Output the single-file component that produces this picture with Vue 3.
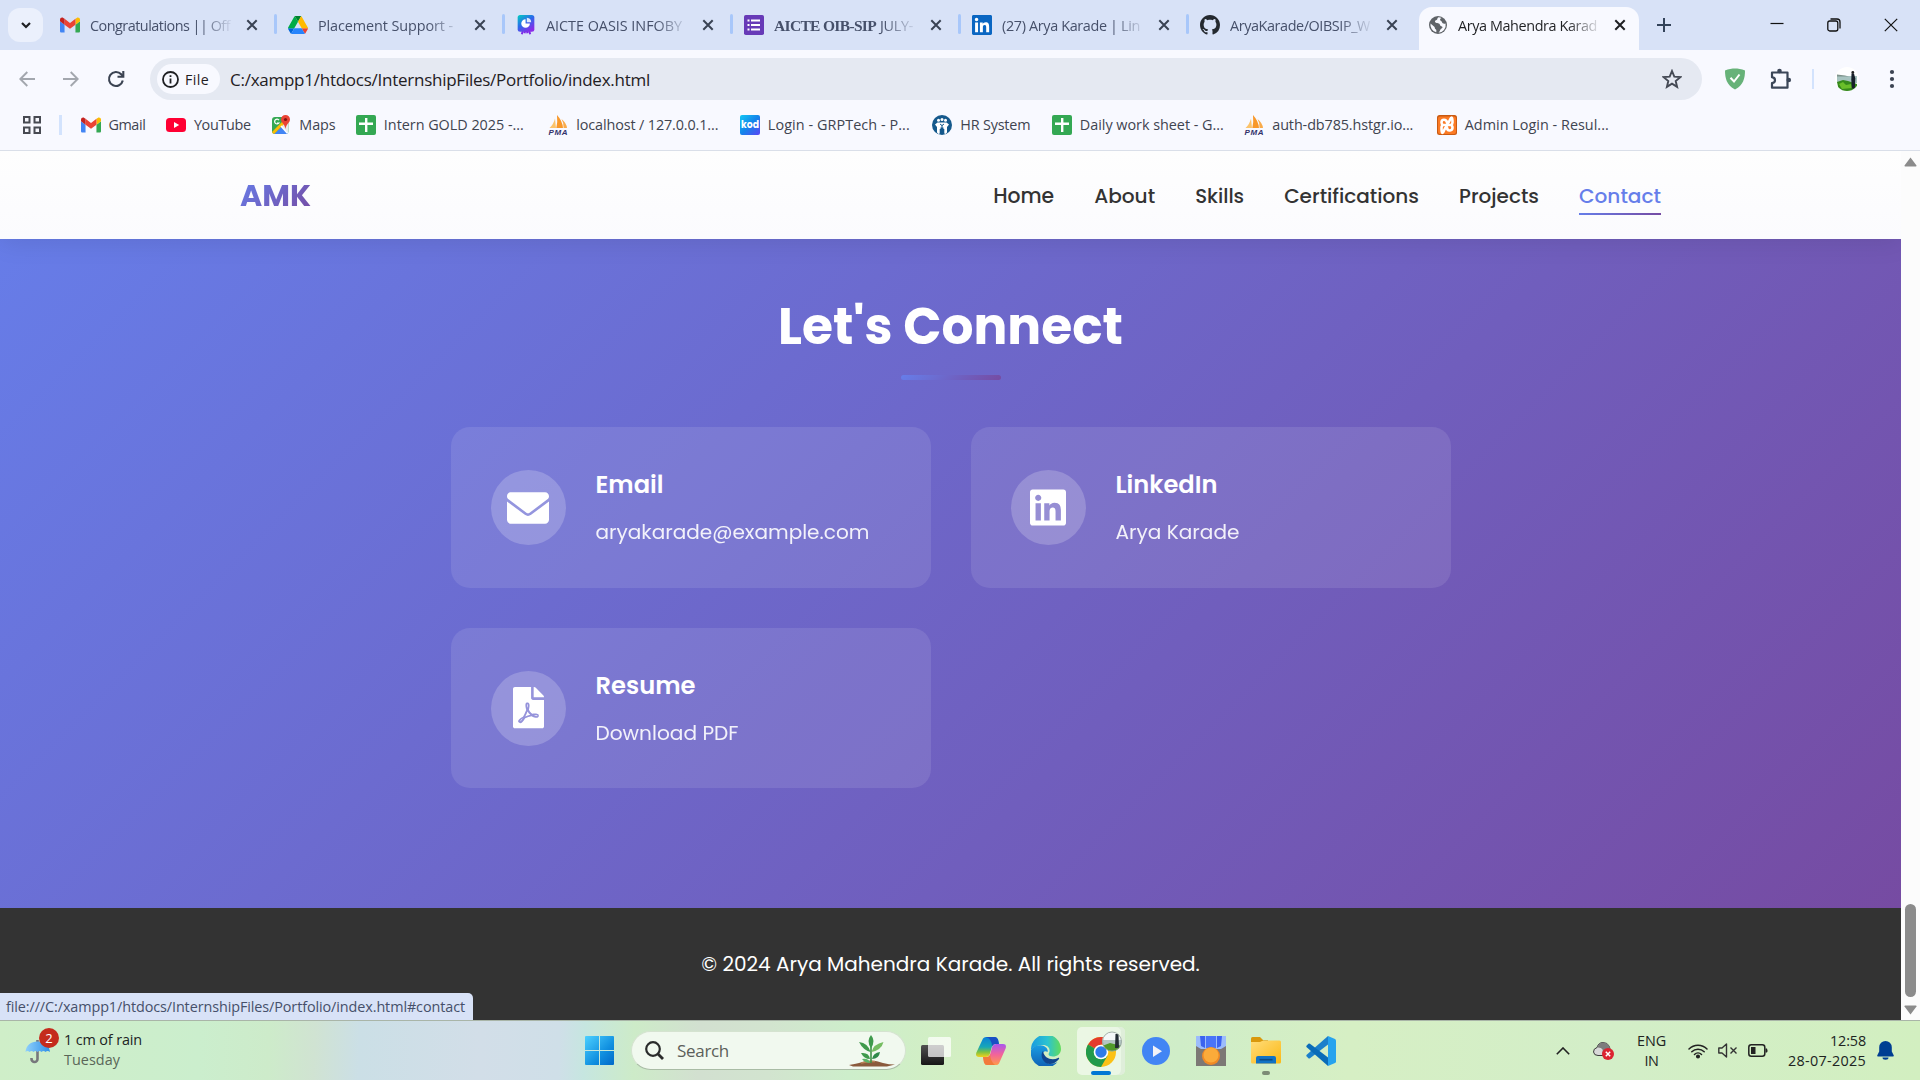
<script setup>
// Makes a label fill its measured width: by letter spacing, or by font size with the .size modifier.
const vFit = {
  mounted(el, { value, modifiers }) {
    if (!value) return
    const natural = el.getBoundingClientRect().width
    if (modifiers.size) {
      el.style.fontSize = parseFloat(getComputedStyle(el).fontSize) * value / natural + 'px'
    } else {
      el.style.letterSpacing = (value - natural) / [...el.textContent.trim()].length + 'px'
    }
  }
}

const linkedin = 'M416 32H31.9C14.3 32 0 46.5 0 64.3v383.4C0 465.5 14.3 480 31.9 480H416c17.6 0 32-14.5 32-32.3V64.3c0-17.8-14.4-32.3-32-32.3zM135.4 416H69V202.2h66.5V416zm-33.2-243c-21.3 0-38.5-17.3-38.5-38.5S80.9 96 102.2 96c21.2 0 38.5 17.3 38.5 38.5 0 21.3-17.2 38.5-38.5 38.5zm282.1 243h-66.4V312c0-24.8-.5-56.7-34.5-56.7-34.6 0-39.9 27-39.9 54.9V416h-66.4V202.2h63.7v29.2h.9c8.9-16.8 30.6-34.5 62.9-34.5 67.2 0 79.7 44.3 79.7 101.9V416z'
const sheet = '<rect width="20" height="20" rx="2" fill="#34a853"/><path d="M9 3h2.4v4.6H17V10h-5.6v7H9v-7H3V7.6h6z" fill="#fff"/>'
const pma = '<path d="M1.5 13Q5.500 9.500 7 3.500L8 13z" fill="#fbc36b"/><path d="M8.3 13Q9.800 7 9 0Q14.500 6 15 13z" fill="#f8982a"/><path d="M15.6 13Q16 8 13.500 4Q18.500 8 19 13z" fill="#f9ab4b"/><text x="10" y="19.5" text-anchor="middle" font-family="Liberation Sans, sans-serif" font-weight="700" font-style="italic" font-size="8" textLength="19" fill="#33336b">PMA</text>'

const icons = {
  gmail: { vb: '52 42 88 66', body: '<path fill="#4285f4" d="M58 108h14V74L52 59v43c0 3.320 2.690 6 6 6"/><path fill="#34a853" d="M120 108h14c3.320 0 6-2.690 6-6V59l-20 15"/><path fill="#fbbc04" d="M120 48v26l20-15v-8c0-7.420-8.470-11.650-14.400-7.200"/><path fill="#ea4335" d="M72 74V48l24 18 24-18v26L96 92"/><path fill="#c5221f" d="M52 51v8l20 15V48l-5.600-4.200c-5.940-4.450-14.400-.22-14.400 7.200"/>' },
  drive: { vb: '0 0 87.3 78', body: '<path d="m6.6 66.850 3.850 6.650c.8 1.4 1.950 2.5 3.3 3.3l13.750-23.8h-27.5c0 1.550.4 3.1 1.2 4.5z" fill="#0066da"/><path d="m43.650 25-13.750-23.8c-1.350.8-2.5 1.9-3.3 3.3l-25.4 44a9.060 9.060 0 0 0-1.2 4.5h27.5z" fill="#00ac47"/><path d="m73.550 76.8c1.350-.8 2.5-1.9 3.3-3.3l1.6-2.750 7.650-13.250c.8-1.4 1.2-2.950 1.2-4.5h-27.502l5.852 11.5z" fill="#ea4335"/><path d="m43.650 25 13.750-23.8c-1.350-.8-2.9-1.2-4.5-1.2h-18.5c-1.6 0-3.150.45-4.5 1.2z" fill="#00832d"/><path d="m59.8 53h-32.3l-13.750 23.8c1.350.8 2.9 1.2 4.5 1.2h50.8c1.6 0 3.150-.45 4.5-1.2z" fill="#2684fc"/><path d="m73.4 26.5-12.7-22c-.8-1.4-1.950-2.5-3.3-3.3l-13.750 23.8 16.150 28h27.450c0-1.550-.4-3.1-1.2-4.5z" fill="#ffba00"/>' },
  board: { vb: '0 0 20 24', body: '<defs><linearGradient id="bd" x1="0" y1="0" x2=".7" y2="1"><stop stop-color="#00d0c0"/><stop offset=".5" stop-color="#2a6bea"/><stop offset="1" stop-color="#8a2be8"/></linearGradient></defs><path d="M6.500 18l-1.500 5M13.500 18l1.500 5M9 19l-.8 3M11 19l.8 3" stroke="#7d2ae8" stroke-width="2.4"/><rect width="20" height="20" rx="3" fill="url(#bd)"/><path d="M9.500 5a5.200 5.200 0 1 0 5.200 5.200H9.500z" fill="#fff"/><path d="M11 3.200a5.500 5.500 0 0 1 5.200 5.500H11z" fill="#fff" opacity=".85"/>' },
  forms: { vb: '0 0 20 20', body: '<rect width="20" height="20" rx="1.8" fill="#673ab7"/><path d="M7 5.500h9M7 10h9M7 14.500h9M3.500 5.500h2M3.500 10h2M3.500 14.500h2" stroke="#fff" stroke-width="2"/>' },
  linkedin: { vb: '0 32 448 448', body: `<path fill="#fff" d="M40 60h370v380H40z"/><path fill="#0a66c2" d="${linkedin}"/>` },
  github: { vb: '0 0 16 16', body: '<path fill="#24292f" d="M8 0C3.580 0 0 3.580 0 8c0 3.540 2.290 6.530 5.470 7.590.4.07.55-.17.55-.38 0-.19-.01-.82-.01-1.490-2.010.37-2.530-.49-2.690-.94-.09-.23-.48-.94-.82-1.130-.28-.15-.68-.52-.01-.53.63-.01 1.080.58 1.230.82.72 1.210 1.870.87 2.330.66.07-.52.28-.87.51-1.070-1.780-.2-3.640-.89-3.640-3.950 0-.87.31-1.590.82-2.150-.08-.2-.36-1.020.08-2.120 0 0 .67-.21 2.200.82.64-.18 1.320-.27 2-.27.68 0 1.360.09 2 .27 1.530-1.040 2.200-.82 2.200-.82.44 1.100.16 1.920.08 2.120.51.56.82 1.270.82 2.150 0 3.070-1.870 3.750-3.650 3.950.29.25.54.73.54 1.480 0 1.070-.01 1.930-.01 2.200 0 .21.15.46.55.38A8.013 8.013 0 0 0 16 8c0-4.420-3.580-8-8-8z"/>' },
  globe: { vb: '0 0 20 20', body: '<circle cx="10" cy="10" r="9" fill="#5f6368"/><path d="M10.500 2.200c-1.800 1-.5 2.300-2 2.800-1.700.5-2 1.500-1 2.500 1.200 1 4.200.2 4.500 2.500.2 1.500 2.300 1 2.500 2.300.1 1.500-1.800 1.200-2.300 2.600-.3 1-1.200 2.500-2.200 2.900A7.800 7.800 0 0 0 17.600 8.500c-1.600.5-3.300.2-3.500-1.200-.2-1.200-2-1.300-2-2.600 0-1 .8-1.400 1.600-1.600a8 8 0 0 0-3.200-.9z" fill="#f8f9ff"/><path d="M2.500 8.500l3.800 3.200c.8.700.2 2 1.300 2.600 1 .6.9 2 .6 3A7.800 7.800 0 0 1 2.500 8.500z" fill="#f8f9ff"/>' },
  youtube: { vb: '0 0 20 20', body: '<rect y="3" width="20" height="14" rx="3.5" fill="#ff0033"/><path d="M8 7v6l5.200-3z" fill="#fff"/>' },
  maps: { vb: '0 0 20 20', body: '<defs><clipPath id="mc"><rect x="1" y="2" width="16.5" height="17" rx="3"/></clipPath></defs><g clip-path="url(#mc)"><path fill="#34a853" d="M0 0h18v20H0z"/><path fill="#e8eaed" d="M10 11l9-8v17h-3z"/><path fill="#4285f4" d="M10.500 11.500L19 20H2z"/><path d="M0 20L18 2" stroke="#fbbc04" stroke-width="3"/><path d="M10 11l8 9" stroke="#fff" stroke-width="1.5"/></g><path d="M8 5.200A2.400 2.400 0 1 0 8 8H6" fill="none" stroke="#fff" stroke-width="1.200"/><path d="M14.500 0a4.500 4.500 0 0 0-4.500 4.600c0 3.200 3.800 4.500 4.500 9.400.7-4.900 4.500-6.200 4.500-9.400A4.500 4.500 0 0 0 14.500 0z" fill="#ea4335"/><circle cx="14.5" cy="4.5" r="1.6" fill="#811411"/>' },
  sheet: { vb: '0 0 20 20', body: sheet },
  pma: { vb: '0 0 20 20', body: pma },
  kod: { vb: '0 0 20 20', body: '<defs><linearGradient id="kd" x1="0" y1="0" x2="1" y2="1"><stop stop-color="#12c8f4"/><stop offset=".5" stop-color="#1484ea"/><stop offset="1" stop-color="#5a45f5"/></linearGradient></defs><rect width="20" height="20" rx="2" fill="url(#kd)"/><text x="10" y="13.3" text-anchor="middle" font-family="Poppins, Inter, sans-serif" font-weight="700" font-size="9.500" textLength="18" lengthAdjust="spacingAndGlyphs" fill="#fff">kod</text>' },
  hr: { vb: '0 0 20 20', body: '<circle cx="10" cy="10" r="10" fill="#15598c"/><g fill="#fff"><circle cx="6.5" cy="5.3" r="1.5"/><circle cx="10" cy="4.6" r="1.5"/><circle cx="13.5" cy="5.3" r="1.5"/><path d="M3 9.500L5.500 7.500h9L17 9.500l-2 2.500v5.500l-1.500 1.500-1.200-.5V14h-.8v-1.500h-3V14h-.8v4.500l-1.200.5L5 17.500V12z"/></g><path d="M8 9l2 1.500L12 9M10 10v9" stroke="#15598c" fill="none"/>' },
  xampp: { vb: '0 0 20 20', body: '<rect width="20" height="20" rx="2.5" fill="#c95a12"/><rect x="1" y="1.5" width="18" height="17.5" rx="2" fill="#fb7a24"/><g fill="none" stroke="#fff" stroke-width="2.6" stroke-linecap="round" stroke-linejoin="round"><path d="M4.500 7.500Q4.500 4.800 7 4.800T10 7.500T13 4.800T15.500 7.500Q15.500 9.500 13.800 10Q15.500 10.500 15.500 12.800T13 15.500T10 12.800T7 15.500T4.500 12.800Q4.500 10.500 6.200 10Q4.500 9.500 4.500 7.500z"/><path d="M7.500 10h5"/></g>' }
}

const tabs = [
  { icon: 'gmail', title: 'Congratulations || Off', fit: 140 },
  { icon: 'drive', title: 'Placement Support -', fit: 135 },
  { icon: 'board', title: 'AICTE OASIS INFOBY', fit: 136 },
  { icon: 'forms', strong: 'AICTE OIB-SIP', title: 'JULY-', fit: 33 },
  { icon: 'linkedin', title: '(27) Arya Karade | Lin', fit: 138 },
  { icon: 'github', title: 'AryaKarade/OIBSIP_W', fit: 140 },
  { icon: 'globe', title: 'Arya Mahendra Karad', fit: 139, active: true }
]

const bookmarks = [
  { icon: 'gmail', text: 'Gmail', w: 37, fit: 37 },
  { icon: 'youtube', text: 'YouTube', w: 57, fit: 57 },
  { icon: 'maps', text: 'Maps', w: 36, fit: 36 },
  { icon: 'sheet', text: 'Intern GOLD 2025 -...', w: 144, fit: 140 },
  { icon: 'pma', text: 'localhost / 127.0.0.1...', w: 143, fit: 142 },
  { icon: 'kod', text: 'Login - GRPTech - P...', w: 144, fit: 142 },
  { icon: 'hr', text: 'HR System', w: 71, fit: 70 },
  { icon: 'sheet', text: 'Daily work sheet - G...', w: 144, fit: 144 },
  { icon: 'pma', text: 'auth-db785.hstgr.io...', w: 144, fit: 141 },
  { icon: 'xampp', text: 'Admin Login - Resul...', w: 144, fit: 144 }
]

const nav = [
  { text: 'Home', fit: 61 },
  { text: 'About', fit: 61 },
  { text: 'Skills', fit: 49 },
  { text: 'Certifications', fit: 135 },
  { text: 'Projects', fit: 80 },
  { text: 'Contact', fit: 82, active: true }
]

const cards = [
  { title: 'Email', tFit: 68, text: 'aryakarade@example.com', fit: 274, vb: '0 0 512 512', w: 42, d: 'M48 64C21.500 64 0 85.500 0 112c0 15.100 7.100 29.300 19.200 38.400L236.800 313.600c11.400 8.500 27 8.500 38.400 0L492.800 150.400c12.100-9.100 19.200-23.300 19.200-38.400c0-26.500-21.500-48-48-48H48zM0 176V400c0 26.500 21.500 48 48 48H464c26.500 0 48-21.500 48-48V176L294.400 339.200c-22.800 17.100-54 17.100-76.800 0L0 176z' },
  { title: 'LinkedIn', tFit: 102, text: 'Arya Karade', fit: 124, vb: '0 0 448 512', w: 36, d: linkedin },
  { title: 'Resume', tFit: 100, text: 'Download PDF', fit: 143, vb: '0 0 384 512', w: 31, d: 'M181.900 256.100c-5-16-4.900-46.900-2-46.900 8.400 0 7.600 36.900 2 46.900zm-1.700 47.200c-7.700 20.200-17.300 43.300-28.400 62.700 18.300-7 39-17.200 62.900-21.900-12.700-9.600-24.900-23.400-34.500-40.800zM86.100 428.100c0 .8 13.200-5.400 34.900-40.200-6.700 6.300-29.100 24.500-34.900 40.200zM248 160h136v328c0 13.300-10.700 24-24 24H24c-13.300 0-24-10.700-24-24V24C0 10.700 10.700 0 24 0h200v136c0 13.200 10.800 24 24 24zm-8 171.800c-20-12.200-33.300-29-42.700-53.800 4.500-18.500 11.600-46.600 6.200-64.200-4.700-29.400-42.400-26.500-47.800-6.800-5 18.300-.4 44.100 8.100 77-11.600 27.600-28.700 64.600-40.800 85.800-.1 0-.1.1-.2.1-27.100 13.900-73.600 44.500-54.500 68 5.600 6.900 16 10 21.500 10 17.900 0 35.700-18 61.100-61.800 25.800-8.500 54.100-19.100 79-23.200 21.700 11.800 47.100 19.500 64 19.500 29.200 0 31.200-32 19.700-43.400-13.900-13.600-54.300-9.700-73.600-7.200zM377 105L279 7c-4.500-4.500-10.600-7-17-7h-6v128h128v-6.100c0-6.300-2.500-12.400-7-16.900zm-74.100 255.300c4.100-2.700-2.500-11.900-42.800-9 37.100 15.800 42.800 9 42.800 9z' }
]
</script>

<template>
  <div class="screen">
    <header class="tabstrip">
      <button class="tab-search">
        <svg width="14" height="14" viewBox="0 0 14 14"><path d="M3 5l4 4 4-4" fill="none" stroke="#1f2023" stroke-width="2.2" /></svg>
      </button>
      <div class="tabs">
        <div v-for="t in tabs" :key="t.icon" class="tab" :class="{ active: t.active }">
          <svg class="tab-icon" :viewBox="icons[t.icon].vb" v-html="icons[t.icon].body"></svg>
          <div class="tab-title">
            <span v-if="t.strong" v-fit="102" class="tab-strong">{{ t.strong }}</span>
            <span v-fit="t.fit" class="line">{{ t.title }}</span>
          </div>
          <svg class="close" width="12" height="12" viewBox="0 0 12 12"><path d="M1.3 1.3l9.4 9.4M10.7 1.3l-9.4 9.4" stroke="currentColor" stroke-width="2" /></svg>
        </div>
      </div>
      <svg class="new-tab" width="14" height="14" viewBox="0 0 14 14"><path d="M7 0v14M0 7h14" stroke="#33435a" stroke-width="2" /></svg>
      <div class="window-buttons">
        <svg width="14" height="14" viewBox="0 0 14 14"><path d="M.5 5.500h13" stroke="#111" stroke-width="1.2" /></svg>
        <svg width="14" height="14" viewBox="0 0 14 14" fill="none" stroke="#111" stroke-width="1.3"><rect x=".8" y="3" width="10" height="10" rx="2" /><path d="M3.500 1h6.500a3 3 0 0 1 3 3v6.500" /></svg>
        <svg width="14" height="14" viewBox="0 0 14 14"><path d="M.8.8l12.400 12.400M13.200.8L.8 13.200" stroke="#111" stroke-width="1.2" /></svg>
      </div>
    </header>

    <div class="chrome">
      <div class="toolbar">
        <svg class="tb" width="16" height="16" viewBox="0 0 16 16" fill="none" stroke="#a3a7ae" stroke-width="1.9"><path d="M16 8H1.500M8.300 1L1.300 8l7 7" /></svg>
        <svg class="tb" width="16" height="16" viewBox="0 0 16 16" fill="none" stroke="#a3a7ae" stroke-width="1.9"><path d="M0 8h14.500M7.700 1l7 7-7 7" /></svg>
        <svg class="tb" width="18" height="18" viewBox="0 0 18 18" fill="none" stroke="#3b4352" stroke-width="2.1"><path d="M15.800 10.500A7 7 0 1 1 14.200 4.300L16 6.300" /><path d="M16.300 1v5.800h-5.800" /></svg>
        <div class="omnibox">
          <div class="chip">
            <svg width="17" height="17" viewBox="0 0 17 17"><circle cx="8.5" cy="8.5" r="7.5" fill="none" stroke="#1f2023" stroke-width="1.8" /><path d="M8.500 7.500v5M8.500 4.200v1.800" stroke="#1f2023" stroke-width="1.8" /></svg>
            <span v-fit="24" class="line">File</span>
          </div>
          <span v-fit="420" class="line url">C:/xampp1/htdocs/InternshipFiles/Portfolio/index.html</span>
          <svg class="star" width="20" height="20" viewBox="0 0 20 20"><path d="M10 2l2.300 5.600 6 .5-4.600 3.900 1.400 5.900-5.100-3.200-5.100 3.200 1.400-5.900L1.700 8.100l6-.5z" fill="none" stroke="#454a55" stroke-width="1.9" /></svg>
        </div>
        <svg class="guard" width="22" height="22" viewBox="0 0 22 22"><path d="M11 .5c3 0 6.500.6 10 2 0 7.500-1.500 14.500-10 19C2.500 17 1 10 1 2.500c3.500-1.400 7-2 10-2z" fill="#67b279" /><path d="M6.500 9.800l3.500 3.700 5.500-7" fill="none" stroke="#fff" stroke-width="2" /></svg>
        <svg class="puzzle" width="23" height="23" viewBox="0 0 23 23"><path d="M3 4.500h15.500v15.200H3v-4.500q3-.5 3-3T3 9.200z" fill="none" stroke="#3b4658" stroke-width="2.2" stroke-linejoin="round" /><circle cx="10.5" cy="3" r="2.3" fill="#3b4658" /><circle cx="19.8" cy="12" r="2.3" fill="#3b4658" /></svg>
        <i class="tb-sep"></i>
        <svg class="avatar" width="24" height="24" viewBox="0 0 24 24"><defs><clipPath id="av"><circle cx="12" cy="12" r="12" /></clipPath></defs><g clip-path="url(#av)"><path fill="#fff" d="M0 0h24v24H0z" /><path fill="#a8c4c0" d="M2 9h20v7H2z" /><path fill="#7f938c" d="M2 7.500l8 1 4 1H2z" /><path fill="#368a1c" d="M2 15l6-2 5 1 9 3v7H4z" /><path fill="#6abe2a" d="M4 17l4-2 3 3 5-1 1 4-10 1z" /><path fill="#17202a" d="M16.500 6.500h2.500l1.300 5-.5 10h-3l-.5-9z" /><circle cx="17.8" cy="5.5" r="1.4" fill="#222" /></g></svg>
        <svg class="dots" width="6" height="20" viewBox="0 0 6 20" fill="#3b4352"><circle cx="3" cy="3" r="2.1" /><circle cx="3" cy="10" r="2.1" /><circle cx="3" cy="17" r="2.1" /></svg>
      </div>
      <div class="bookmarks">
        <svg class="apps" width="18" height="18" viewBox="0 0 18 18" fill="none" stroke="#474a52" stroke-width="2"><path d="M1 1h5.500v5.500H1zM11.500 1H17v5.500h-5.500zM1 11.500h5.500V17H1zM11.500 11.500H17V17h-5.500z" /></svg>
        <i class="bm-sep"></i>
        <div v-for="b in bookmarks" :key="b.text" class="bm">
          <svg class="bm-icon" :viewBox="icons[b.icon].vb" v-html="icons[b.icon].body"></svg>
          <div class="bm-label" :style="{ width: b.w + 'px' }"><span v-fit="b.fit" class="line">{{ b.text }}</span></div>
        </div>
      </div>
    </div>

    <div class="viewport">
      <div class="page">
        <nav class="nav">
          <span v-fit.size="71" class="logo line">AMK</span>
          <ul class="links">
            <li v-for="n in nav" :key="n.text" :class="{ active: n.active }"><span v-fit.size="n.fit" class="line">{{ n.text }}</span></li>
          </ul>
        </nav>
        <section class="contact">
          <h2><span v-fit.size="345" class="line">Let's Connect</span></h2>
          <i class="rule"></i>
          <div class="grid">
            <article v-for="c in cards" :key="c.title" class="card">
              <div class="bubble"><svg :width="c.w" :viewBox="c.vb"><path :d="c.d" fill="#fff" /></svg></div>
              <div class="info">
                <h3><span v-fit.size="c.tFit" class="line">{{ c.title }}</span></h3>
                <p><span v-fit.size="c.fit" class="line">{{ c.text }}</span></p>
              </div>
            </article>
          </div>
        </section>
        <footer class="footer"><span v-fit.size="499" class="line">© 2024 Arya Mahendra Karade. All rights reserved.</span></footer>
        <div class="status"><span v-fit="459" class="line">file:///C:/xampp1/htdocs/InternshipFiles/Portfolio/index.html#contact</span></div>
      </div>
      <div class="scrollbar">
        <svg width="13" height="10" viewBox="0 0 13 10"><path d="M6.500.5L12.500 8.500q.2 1-.8 1H1.300q-1 0-.8-1z" fill="#8b8b8b" /></svg>
        <i class="thumb"></i>
        <svg width="13" height="10" viewBox="0 0 13 10"><path d="M6.500 9.500L.5 1.500q-.2-1 .8-1h10.400q1 0 .8 1z" fill="#8b8b8b" /></svg>
      </div>
    </div>

    <div class="taskbar">
      <div class="weather">
        <div class="umbrella">
          <svg width="26" height="28" viewBox="0 0 26 28"><defs><linearGradient id="um" x1="0" x2="1"><stop stop-color="#8fd0fb" /><stop offset="1" stop-color="#2f8fe8" /></linearGradient></defs><path d="M12.500 4v19a3 3 0 0 1-6 0v-1" fill="none" stroke="#77777c" stroke-width="2.6" /><path d="M.5 16C1 9.500 6 5.500 12.500 5.500S24.500 9.500 25 16q-2.500-2-4.500 0-2-1.800-4 0-2-1.800-4 0-2-1.800-4 0-2-1.800-4 0-2-1.800-4 0z" fill="url(#um)" /></svg>
          <b class="badge">2</b>
        </div>
        <div class="two">
          <span v-fit="78" class="line">1 cm of rain</span>
          <span v-fit="56" class="line dim">Tuesday</span>
        </div>
      </div>
      <div class="dock">
        <svg class="start" width="29" height="29" viewBox="0 0 29 29"><defs><linearGradient id="wn" x1="0" y1="0" x2="1" y2="1"><stop stop-color="#4cd0ff" /><stop offset=".6" stop-color="#1190e0" /><stop offset="1" stop-color="#0067c8" /></linearGradient></defs><path d="M1 0h13v14H0V1q0-1 1-1zM15 0h13q1 0 1 1v13H15zM0 15h14v14H1q-1 0-1-1zM15 15h14v13q0 1-1 1H15z" fill="url(#wn)" /></svg>
        <div class="search">
          <svg width="19" height="19" viewBox="0 0 19 19" fill="none" stroke="#2a2b2b"><circle cx="8" cy="8" r="6.8" stroke-width="2.2" /><path d="M13 13l5 5" stroke-width="2.8" /></svg>
          <span v-fit="52" class="line">Search</span>
          <svg class="plant" width="46" height="32" viewBox="0 0 46 32"><path d="M0 30q6-1 10-2 6-2.500 12-2.500t12 2.500q6 1.500 12 1.500l-8 2H4z" fill="#8a5a3c" /><path d="M12 28q6-2 14-1.500" stroke="#b98055" stroke-width="1.5" fill="none" /><path d="M22 28V10" stroke="#3f9147" stroke-width="1.6" /><g fill="#3f9a4c"><path d="M22 0q5 6 0 13-5-7 0-13z" /><path d="M21.500 17Q14 15 10 7q9 1 11.500 10z" /><path d="M22.500 17q2-8 12-10-2 8-12 10z" fill="#76bd62" /><path d="M21 24q-6 0-9-6 8-1 9 6z" /><path d="M21 28q-5 0-8-4 7-1 8 4z" fill="#5bb368" /><path d="M23 24q1-6 8-7-1 7-8 7z" fill="#2f8a4a" /></g></svg>
        </div>
        <div class="app"><svg width="30" height="28" viewBox="0 0 30 28"><defs><linearGradient id="tv" x2="0" y2="1"><stop stop-color="#505050" /><stop offset="1" stop-color="#161616" /></linearGradient></defs><rect y="8" width="23" height="20" rx="1.5" fill="url(#tv)" /><rect x="7" y="0" width="23" height="20" rx="1.5" fill="#fff" opacity=".72" /></svg></div>
        <div class="app"><svg width="30" height="28" viewBox="0 0 30 28"><defs><linearGradient id="c1" x2="0" y2="1"><stop stop-color="#0b7fd8" /><stop offset=".5" stop-color="#17a7b8" /><stop offset=".75" stop-color="#7cc242" /><stop offset="1" stop-color="#f3d11c" /></linearGradient><linearGradient id="c2" x2="0" y2="1"><stop stop-color="#a956ee" /><stop offset=".5" stop-color="#f2649a" /><stop offset="1" stop-color="#ff9b4a" /></linearGradient></defs><path d="M7 1.500Q8 0 10 0h9q2 0 3 2.500L23 7h-4q-2.500 0-3.200 3l-2 7q-1 3-4 3H3q-4 0-2.600-4.500z" fill="url(#c1)" /><path d="M23 26.500Q22 28 20 28h-9q-2 0-3-2.500L7 20h4q2.500 0 3.200-3l2-7q1-3 4-3H27q4 0 2.600 4.500z" fill="url(#c2)" /><path d="M10 0h9q2 0 3 2.500L23 7h-4q-2 0-3 2.500Q16 2 10 0z" fill="#1a4fc4" /><path d="M7 20h4q2.500 0 3.200-3Q14 24 19 28h-8q-2 0-3-2.500z" fill="#f27a3c" /></svg></div>
        <div class="app"><svg width="30" height="30" viewBox="0 0 30 30"><defs><linearGradient id="e1"><stop stop-color="#1a9be0" /><stop offset=".55" stop-color="#2cc3d0" /><stop offset="1" stop-color="#62dc5a" /></linearGradient><linearGradient id="e2" x2="0" y2="1"><stop stop-color="#1b9de2" /><stop offset="1" stop-color="#0f5fb4" /></linearGradient></defs><path d="M0 14A15 15 0 0 1 30 13c0 5-4 7.500-8 7.500-3 0-5.500-1-4-3.500 2-4-1-8-6-8C7 9 2 11 0 14z" fill="url(#e1)" /><path d="M0 14c2-4 7-5.500 11-4.500 4 .8 6.500 4 5.500 6.500-4-2.500-6.500 3-4 7.500s9 5.500 14 2.500A15 15 0 0 1 0 14z" fill="url(#e2)" /><path d="M12 15c-3 4-1 10 4 12.500 4 1.500 9-.5 12-4.500.5-1-.3-1.500-1-1-6 3-14 .5-15-7z" fill="#10458f" /></svg></div>
        <div class="app open">
          <svg width="38" height="38" viewBox="0 0 38 38"><defs><clipPath id="pf"><circle cx="26" cy="12.5" r="9.8" /></clipPath></defs><circle cx="15" cy="23" r="15" fill="#fbc116" /><path d="M15 23L2 15.500A15 15 0 0 1 28 15.500H15z" fill="#e33b2e" /><path d="M2 15.500A15 15 0 0 0 15 38l6.500-11.200L15 23z" fill="#229a4b" /><circle cx="15" cy="23" r="7.3" fill="#fff" /><circle cx="15" cy="23" r="5.7" fill="#2f7bea" /><g clip-path="url(#pf)"><path fill="#f4f8f8" d="M16 2h20v21H16z" /><path fill="#b4c6c4" d="M16 11h20v6H16z" /><path d="M16 17l8-3 12 3v7H16z" fill="#4f9a2a" /><path d="M29.500 5h3l.5 14h-4z" fill="#222c33" /></g><circle cx="26" cy="12.5" r="9.5" fill="none" stroke="#8fa096" stroke-width=".8" /></svg>
          <i class="under blue"></i>
        </div>
        <div class="app"><svg width="28" height="28" viewBox="0 0 28 28"><circle cx="14" cy="14" r="14" fill="#4285f4" /><path d="M11 8.500v11.500l9-5.700z" fill="#f2f2f7" /></svg></div>
        <div class="app"><svg width="30" height="30" viewBox="0 0 30 30"><path fill="#7c7875" d="M0 0h30v30H0z" /><path fill="#9cbcfb" d="M0 0h30v10l-5 3H5l-5-3z" /><path fill="#3c63f0" d="M4 0h5v12l-4-2zM21 0h5l-1 10-4 2z" /><path fill="#4a74f8" d="M10 0h10v12H10z" /><circle cx="15" cy="20" r="9" fill="#f08a24" /><circle cx="15" cy="19" r="7.5" fill="#fbab3a" /></svg></div>
        <div class="app"><svg width="30" height="27" viewBox="0 0 30 27"><defs><linearGradient id="fo" x2="1" y2="1"><stop stop-color="#ffdc7a" /><stop offset="1" stop-color="#fbb914" /></linearGradient></defs><path d="M0 1.500Q0 0 1.500 0H9l3 3v4H0z" fill="#d9980c" /><rect y="3.5" width="30" height="23" rx="1.5" fill="url(#fo)" /><path d="M0 5h9l3-1.500h5V3H0z" fill="#d9980c" /><path d="M5 26.500V21q0-2 2-2h16q2 0 2 2v5.500z" fill="#1273c4" /><path d="M8.500 22.700h13" stroke="#0a4b86" stroke-width="1.6" /></svg><i class="under"></i></div>
        <div class="app"><svg width="30" height="30" viewBox="0 0 30 30"><path d="M22 0l7 3q1 .5 1 1.500v21q0 1-1 1.500l-7 3z" fill="#27a3ee" /><path d="M22 0L.7 18.800q-.8.8 0 1.700l1.700 1.700q.8.6 1.600 0L22 8.500z" fill="#1b7fcb" /><path d="M22 30L.7 11.200q-.8-.8 0-1.700l1.700-1.700q.8-.6 1.600 0L22 21.500z" fill="#0a6cb8" /></svg></div>
      </div>
      <div class="tray">
        <svg class="chev" width="14" height="8" viewBox="0 0 14 8"><path d="M.8 7.200L7 1l6.200 6.200" fill="none" stroke="#222" stroke-width="1.6" /></svg>
        <svg class="cloud" width="22" height="20" viewBox="0 0 22 20"><path d="M5 14.500q-4 0-4.500-3.500Q.4 7.500 4 6.500 5.500 1.500 10 1.500q4.500 0 6.300 3.800L17 8l-6 6.500z" fill="#d8d8d8" stroke="#3c3c3c" /><path d="M4 6.500Q6 1.500 10 1.500t6.500 4L17 8 9 13q3-7-5-6.500z" fill="#7d7d7d" /><circle cx="15" cy="13" r="6" fill="#dc2430" /><path d="M12.800 10.800l4.400 4.400M17.200 10.800l-4.400 4.400" stroke="#fff" stroke-width="1.5" /></svg>
        <div class="two center lang"><span v-fit="29" class="line">ENG</span><span v-fit="14" class="line">IN</span></div>
        <svg class="wifi" width="20" height="16" viewBox="0 0 20 16" fill="none" stroke="#222" stroke-width="1.5" stroke-linecap="round"><path d="M1 6a12.500 12.500 0 0 1 18 0M3.800 8.800a8.700 8.700 0 0 1 12.400 0M6.500 11.500a5 5 0 0 1 7 0" /><circle cx="10" cy="13.5" r="1.3" fill="#222" /></svg>
        <svg class="vol" width="20" height="15" viewBox="0 0 20 15" fill="none" stroke="#333" stroke-width="1.4"><path d="M.8 5h3.200l4.500-4v13L4 10H.8z" stroke-linejoin="round" /><path d="M12.500 4.500l6 6M18.500 4.500l-6 6" /></svg>
        <svg class="bat" width="20" height="13" viewBox="0 0 20 13"><rect x=".8" y=".8" width="16" height="11.4" rx="2.5" fill="none" stroke="#222" stroke-width="1.5" /><path d="M3 3h4.500v7H3zM17.500 4.500H19q1 2 0 4h-1.500z" fill="#222" /></svg>
        <div class="two end clock"><span v-fit="36" class="line">12:58</span><span v-fit="78" class="line">28-07-2025</span></div>
        <svg class="bell" width="17" height="19" viewBox="0 0 17 19"><path d="M8.500 0a6.300 6.300 0 0 1 6.300 6.300v4.200l2 4q.2 1-.8 1H1q-1 0-.8-1l2-4V6.300A6.300 6.300 0 0 1 8.500 0zM5.500 16.500h6a3 2.200 0 0 1-6 0z" fill="#003e92" /></svg>
      </div>
    </div>
  </div>
</template>

<style>
body { margin: 0; overflow: hidden; }
</style>

<style scoped>
* { box-sizing: border-box; }
.screen { width: 1920px; height: 1080px; display: flex; flex-direction: column; overflow: hidden; font-family: "Open Sans", "Noto Sans", sans-serif; color: #1f2023; }
svg { display: block; flex: none; }
i { display: block; }
.line { display: inline-block; white-space: nowrap; }

.tabstrip { height: 50px; background: #d8e2f7; display: flex; align-items: center; flex: none; }
.tab-search { margin: 0 4px 0 8px; width: 35px; height: 34px; border: 0; border-radius: 12px; background: #ebf0fc; display: flex; align-items: center; justify-content: center; padding: 0; }
.tabs { display: flex; height: 50px; }
.tab { width: 228px; height: 50px; display: flex; align-items: center; padding-left: 13px; position: relative; color: #46506a; flex: none; }
.tab::after { content: ""; position: absolute; right: -2px; top: 14px; width: 3px; height: 20px; border-radius: 2px; background: #a8c7fa; }
.tab:nth-child(6)::after, .tab.active::after { display: none; }
.tab-icon { width: 20px; height: 20px; margin-right: 10px; }
.tab-title { width: 144px; padding-top: 1px; white-space: nowrap; font-size: 14.4px; line-height: 22px; mask-image: linear-gradient(90deg, #000 76%, transparent 100%); }
.tab-strong { font-family: "Liberation Serif", serif; font-weight: 700; font-size: 15.5px; line-height: 20px; display: inline-block; margin-right: 4px; }
.close { margin-left: 12px; color: #3a4354; }
.active { color: #1f2023; }
.tab.active::before { content: ""; position: absolute; z-index: 0; left: 4px; top: 7px; width: 220px; height: 43px; background: #f8f9ff; border-radius: 13px 13px 0 0; }
.tab.active > * { position: relative; }
.tab.active .close { color: #1f2023; }
.new-tab { margin-left: 14px; }
.window-buttons { margin-left: auto; display: flex; gap: 43px; margin-right: 22px; }

.chrome { height: 101px; flex: none; background: #f8f9ff; border-bottom: 1px solid #dadfe9; }
.toolbar { height: 50px; padding: 8px 0 0 19px; display: flex; align-items: center; }
.tb { margin-right: 28px; }
.tb:nth-child(3) { margin-right: 25px; }
.omnibox { width: 1552px; height: 42px; border-radius: 21px; background: #e5e9f2; display: flex; align-items: center; padding-left: 7px; }
.chip { width: 63px; height: 30px; border-radius: 15px; background: #f8f9ff; display: flex; align-items: center; gap: 6px; padding-left: 5px; font-size: 14.2px; font-weight: 500; }
.url { margin-left: 10px; font-size: 17px; line-height: 24px; padding-top: 1px; }
.star { margin-left: auto; margin-right: 20px; }
.guard { margin-left: 22px; }
.puzzle { margin-left: 23px; }
.tb-sep { width: 2px; height: 20px; background: #d3e3fd; margin-left: 20px; }
.avatar { margin-left: 21px; }
.dots { margin-left: 30px; }
.bookmarks { height: 50px; display: flex; align-items: center; padding-left: 23px; font-size: 14.4px; color: #3f4450; }
.bm-sep { width: 3px; height: 20px; background: #d3e3fd; margin: 0 18.5px 0 18px; }
.bm { display: flex; align-items: center; margin-right: 20.6px; }
.bm-icon { width: 20px; height: 20px; margin-right: 7.9px; }
.bm-label { white-space: nowrap; line-height: 20px; }

.viewport { height: 869px; flex: none; display: flex; }
.page { width: 1901px; height: 869px; position: relative; overflow: hidden; display: flex; flex-direction: column; font-family: "Poppins", "Inter", sans-serif; }
.nav { height: 88px; flex: none; background: linear-gradient(#fefefe, #fbfbfe); box-shadow: 0 2px 25px rgba(0, 0, 0, .1); position: relative; z-index: 1; display: flex; justify-content: space-between; padding: 2px 240px 0; align-items: center; }
.logo { font-size: 30px; line-height: 40px; font-weight: 700; background: linear-gradient(135deg, #667eea, #764ba2); background-clip: text; color: transparent; }
.links { list-style: none; margin: 0; padding: 0; display: flex; gap: 40px; font-size: 20px; font-weight: 500; color: #333; line-height: 32px; }
.links li { position: relative; height: 32px; }
.links .active { color: #667eea; }
.links .active::after { content: ""; position: absolute; left: 0; bottom: -3px; width: 100%; height: 2px; background: linear-gradient(135deg, #667eea, #764ba2); }
.contact { height: 669px; flex: none; background: linear-gradient(135deg, #667eea 0%, #764ba2 100%) bottom / 100% 742px no-repeat; display: flex; flex-direction: column; align-items: center; }
h2, h3, p { margin: 0; color: #fff; }
h2 { margin-top: 48px; height: 80px; line-height: 80px; font-size: 50px; font-weight: 700; }
.rule { margin-top: 8px; width: 100px; height: 5px; border-radius: 3px; background: linear-gradient(135deg, #667eea, #764ba2); }
.grid { margin-top: 47px; display: grid; grid-template-columns: 480px 480px; grid-template-rows: 161px 160px; gap: 40px; }
.card { border-radius: 19px; background: rgba(255, 255, 255, .1); display: flex; align-items: center; padding-left: 40px; gap: 30px; }
.bubble { width: 75px; height: 75px; border-radius: 50%; background: rgba(255, 255, 255, .2); display: flex; align-items: center; justify-content: center; }
h3 { font-size: 24px; font-weight: 600; line-height: 40px; height: 40px; }
p { font-size: 20px; line-height: 32px; height: 32px; opacity: .9; margin-top: 11px; }
.info { position: relative; top: -1px; }
.footer { height: 112px; flex: none; background: #333; color: #fff; display: flex; align-items: center; justify-content: center; font-size: 20px; }
.status { position: absolute; left: 0; bottom: 0; width: 473px; height: 27px; background: #d8e2f7; border-radius: 0 5px 0 0; padding-left: 6px; line-height: 28px; font-family: "Open Sans", sans-serif; font-size: 14.4px; color: #46506a; white-space: nowrap; }
.scrollbar { width: 19px; background: #fcfcfc; display: flex; flex-direction: column; align-items: center; padding: 6px 0 5px; }
.thumb { width: 11px; height: 93px; border-radius: 6px; background: #8b8b8b; margin: auto 0 8px; }

.taskbar { height: 60px; border-top: 1px solid #a9b5a8; display: flex; position: relative; background: linear-gradient(92deg, #cfeec8 0, #cbeecd 200px, #cdebca 270px, #d0e3d2 315px, #cbdfe6 360px, #d2dee8 480px, #cfdfe8 560px, #c6e6e0 585px, #cdebc8 635px, #d2e0d0 700px, #d2e4cf 770px, #cdeecb 850px, #d5efc0 1000px, #cfedc8 1180px, #d6efc4 1350px, #d3eec8 1600px, #d2efc0 1920px); }
.weather { width: 585px; display: flex; padding: 9px 0 0 25px; flex: none; }
.umbrella { position: relative; width: 39px; padding-top: 6px; }
.badge { position: absolute; left: 14px; top: -2px; width: 20px; height: 20px; border-radius: 50%; background: #c42b1c; color: #fff; font-size: 13px; line-height: 20px; text-align: center; font-weight: 400; }
.two { display: flex; flex-direction: column; align-items: flex-start; font-size: 14.4px; line-height: 20px; color: #20241f; }
.dim { color: #5a6658; }
.center { align-items: center; }
.end { align-items: flex-end; }
.dock { display: flex; align-items: center; }
.search { margin: 0 2.5px 0 17px; width: 275px; height: 39px; border-radius: 20px; background: #f1f9ef; border: 1px solid #d5e3d0; border-bottom-color: #a9bca5; display: flex; align-items: center; padding-left: 13px; font-size: 17px; color: #5c605a; }
.search .line { margin-left: 13px; }
.plant { margin-left: auto; margin-right: 10px; }
.app { width: 55px; height: 48px; display: flex; align-items: center; justify-content: center; position: relative; }
.app.open { background: rgba(255, 255, 255, .55); border-radius: 5px; width: 48px; margin: 0 3.5px; box-shadow: inset -4px 0 0 rgba(220, 235, 215, .8); align-items: flex-start; padding: 2px 0 0 8px; }
.under { position: absolute; bottom: 0; left: 50%; width: 8px; height: 4px; margin-left: -4px; border-radius: 2px; background: #7d8b76; }
.under.blue { width: 20px; margin-left: -10px; background: #0078d4; }
.tray { margin-left: auto; display: flex; align-items: center; padding-right: 26px; }
.cloud { margin-left: 23px; }
.lang { margin-left: 22px; }
.wifi { margin-left: 22px; }
.vol { margin-left: 10px; }
.bat { margin-left: 10px; }
.clock { margin-left: 20px; }
.bell { margin-left: 11px; }
</style>
